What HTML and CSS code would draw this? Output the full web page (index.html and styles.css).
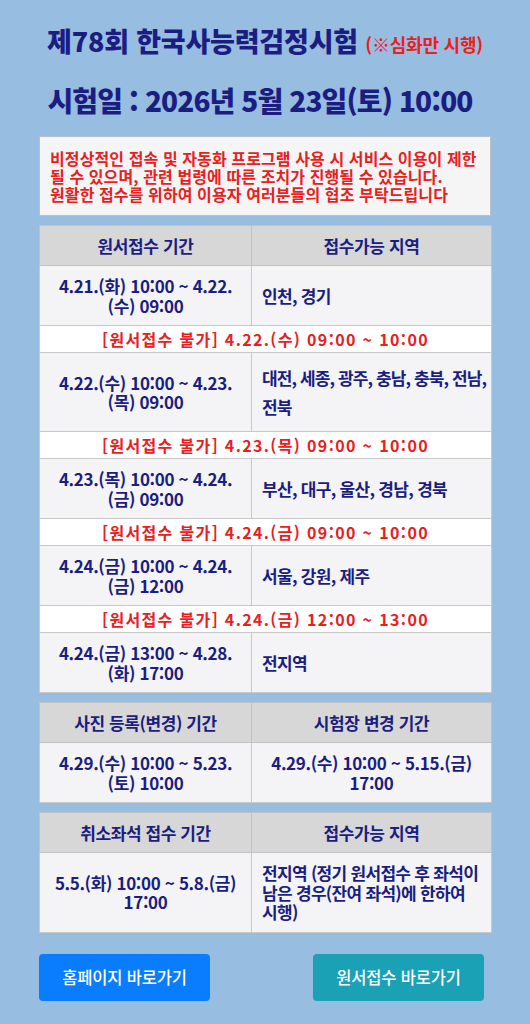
FILE: index.html
```html
<!DOCTYPE html>
<html lang="ko">
<head>
<meta charset="utf-8">
<title>제78회 한국사능력검정시험</title>
<link rel="stylesheet" href="styles.css">
</head>
<body>
<div class="page">
  <header class="head">
    <h1 class="title">제78회 한국사능력검정시험 <span class="note">(※심화만 시행)</span></h1>
    <p class="date">시험일 : 2026년 5월 23일(토) 10:00</p>
  </header>

  <div class="notice">
    비정상적인 접속 및 자동화 프로그램 사용 시 서비스 이용이 제한<br>
    될 수 있으며, 관련 법령에 따른 조치가 진행될 수 있습니다.<br>
    원활한 접수를 위하여 이용자 여러분들의 협조 부탁드립니다
  </div>

  <table class="tbl first">
    <colgroup><col class="c1"><col class="c2"></colgroup>
    <thead>
      <tr><th>원서접수 기간</th><th>접수가능 지역</th></tr>
    </thead>
    <tbody>
      <tr><td class="period">4.21.(화) 10:00 ~ 4.22.(수) 09:00</td><td class="area">인천, 경기</td></tr>
      <tr class="block"><td colspan="2">[원서접수 불가] 4.22.(수) 09:00 ~ 10:00</td></tr>
      <tr><td class="period">4.22.(수) 10:00 ~ 4.23.(목) 09:00</td><td class="area tall">대전, 세종, 광주, 충남, 충북, 전남, 전북</td></tr>
      <tr class="block"><td colspan="2">[원서접수 불가] 4.23.(목) 09:00 ~ 10:00</td></tr>
      <tr><td class="period">4.23.(목) 10:00 ~ 4.24.(금) 09:00</td><td class="area">부산, 대구, 울산, 경남, 경북</td></tr>
      <tr class="block"><td colspan="2">[원서접수 불가] 4.24.(금) 09:00 ~ 10:00</td></tr>
      <tr><td class="period">4.24.(금) 10:00 ~ 4.24.(금) 12:00</td><td class="area">서울, 강원, 제주</td></tr>
      <tr class="block"><td colspan="2">[원서접수 불가] 4.24.(금) 12:00 ~ 13:00</td></tr>
      <tr><td class="period">4.24.(금) 13:00 ~ 4.28.(화) 17:00</td><td class="area">전지역</td></tr>
    </tbody>
  </table>

  <table class="tbl">
    <colgroup><col class="c1"><col class="c2"></colgroup>
    <thead>
      <tr><th>사진 등록(변경) 기간</th><th>시험장 변경 기간</th></tr>
    </thead>
    <tbody>
      <tr><td class="period">4.29.(수) 10:00 ~ 5.23.(토) 10:00</td><td class="period">4.29.(수) 10:00 ~ 5.15.(금) 17:00</td></tr>
    </tbody>
  </table>

  <table class="tbl">
    <colgroup><col class="c1"><col class="c2"></colgroup>
    <thead>
      <tr><th>취소좌석 접수 기간</th><th>접수가능 지역</th></tr>
    </thead>
    <tbody>
      <tr><td class="period">5.5.(화) 10:00 ~ 5.8.(금) 17:00</td><td class="area">전지역 (정기 원서접수 후 좌석이 남은 경우(잔여 좌석)에 한하여 시행)</td></tr>
    </tbody>
  </table>

  <div class="buttons">
    <a class="btn btn-home" href="#">홈페이지 바로가기</a>
    <a class="btn btn-apply" href="#">원서접수 바로가기</a>
  </div>
</div>
</body>
</html>
```

FILE: styles.css
```css
* { box-sizing: border-box; }

html, body {
  margin: 0;
  padding: 0;
}

body {
  background: #97bde0;
  font-family: "Noto Sans CJK KR", "Noto Sans", sans-serif;
  color: #1b1d80;
  min-height: 1024px;
}

.page {
  width: 452px;
  margin: 0 auto;
  padding-top: 24px;
}

.head {
  text-align: center;
}

.title {
  margin: 0;
  font-size: 27px;
  line-height: 34px;
  font-weight: 900;
  letter-spacing: -0.2px;
  color: #1b1d80;
  white-space: nowrap;
}

.note {
  font-size: 18px;
  font-weight: 700;
  color: #e8201e;
  letter-spacing: -0.2px;
}

.date {
  margin: 22px 0 0;
  padding-right: 10px;
  font-size: 28px;
  line-height: 34px;
  font-weight: 900;
  letter-spacing: -0.9px;
  white-space: nowrap;
}

.notice {
  margin-top: 19px;
  background: #f5f5f5;
  border: 1px solid #b9c2cc;
  padding: 12px 6px 12px 10px;
  color: #e8201e;
  font-size: 16px;
  line-height: 18px;
  font-weight: 700;
  letter-spacing: 0.1px;
  white-space: nowrap;
}

.tbl {
  width: 452px;
  margin-top: 9px;
  border-collapse: collapse;
  table-layout: fixed;
  border: 1px solid #b3b9c0;
}

.tbl.first {
  margin-top: 9px;
}

.c1 { width: 212px; }
.c2 { width: 240px; }

.tbl th {
  height: 40px;
  padding: 0 6px;
  background: #d7d7d7;
  border: 1px solid #c2c2c2;
  font-size: 17px;
  font-weight: 700;
  letter-spacing: -0.4px;
  color: #1b1d80;
}

.tbl td {
  border: 1px solid #c8c8c8;
  background: #f4f4f6;
  padding: 10px 12px;
  font-size: 17px;
  line-height: 19.5px;
  font-weight: 700;
  letter-spacing: -0.6px;
  color: #1b1d80;
  word-break: keep-all;
}

.tbl td.period {
  text-align: center;
  padding: 10px 12px;
  letter-spacing: -0.35px;
}

.tbl td.area {
  text-align: left;
  padding: 10px 3px 10px 10px;
  letter-spacing: -0.7px;
}

.tbl td.area.tall {
  line-height: 29px;
  letter-spacing: -0.9px;
}

.tbl tr.block td {
  background: #ffffff;
  padding: 5px 0;
  text-align: center;
  color: #e8201e;
  font-size: 16px;
  line-height: 16px;
  letter-spacing: 1.35px;
  font-weight: 700;
}

.buttons {
  display: flex;
  justify-content: space-between;
  padding-right: 7px;
  margin-top: 21px;
}

.btn {
  display: flex;
  align-items: center;
  justify-content: center;
  width: 171px;
  height: 47px;
  border-radius: 4px;
  color: #ffffff;
  text-decoration: none;
  font-size: 16.5px;
  font-weight: 500;
  letter-spacing: -0.2px;
}

.btn-home {
  background: #0a7dff;
}

.btn-apply {
  background: #1aa1b6;
}
```
